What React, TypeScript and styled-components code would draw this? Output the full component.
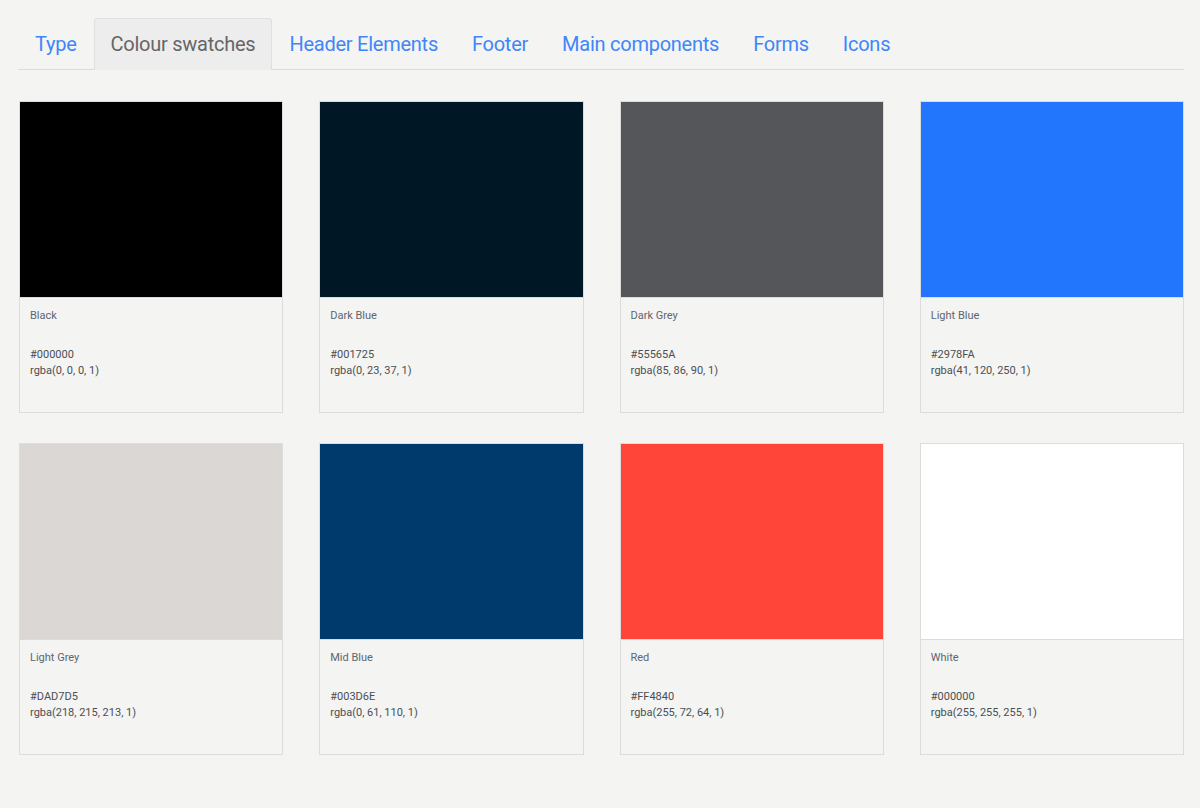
import React from 'react';
import styled, { createGlobalStyle } from 'styled-components';

const GlobalStyle = createGlobalStyle`
  html, body {
    margin: 0;
    padding: 0;
    background: #f4f4f2;
  }
  body {
    font-family: Roboto, 'Liberation Sans', Arial, sans-serif;
  }
`;

type Swatch = {
  name: string;
  hex: string;
  color: string;
  rgba: string;
};

const swatches: Swatch[] = [
  { name: 'Black', hex: '#000000', color: '#000000', rgba: 'rgba(0, 0, 0, 1)' },
  { name: 'Dark Blue', hex: '#001725', color: '#001725', rgba: 'rgba(0, 23, 37, 1)' },
  { name: 'Dark Grey', hex: '#55565A', color: '#55565a', rgba: 'rgba(85, 86, 90, 1)' },
  { name: 'Light Blue', hex: '#2978FA', color: '#2176fd', rgba: 'rgba(41, 120, 250, 1)' },
  { name: 'Light Grey', hex: '#DAD7D5', color: '#dad7d4', rgba: 'rgba(218, 215, 213, 1)' },
  { name: 'Mid Blue', hex: '#003D6E', color: '#003a6c', rgba: 'rgba(0, 61, 110, 1)' },
  { name: 'Red', hex: '#FF4840', color: '#ff453a', rgba: 'rgba(255, 72, 64, 1)' },
  { name: 'White', hex: '#000000', color: '#ffffff', rgba: 'rgba(255, 255, 255, 1)' },
];

const tabs = [
  'Type',
  'Colour swatches',
  'Header Elements',
  'Footer',
  'Main components',
  'Forms',
  'Icons',
];

const App = () => {
  const active = 'Colour swatches';
  return (
    <Page>
      <GlobalStyle />
      <Tabs>
        {tabs.map((t) => (
          <Tab key={t} active={t === active}>
            {t}
          </Tab>
        ))}
      </Tabs>
      <Grid>
        {swatches.map((s) => (
          <Card key={s.name}>
            <Colour fill={s.color} />
            <Info>
              <Name>{s.name}</Name>
              <Values>
                <div>{s.hex}</div>
                <div>{s.rgba}</div>
              </Values>
            </Info>
          </Card>
        ))}
      </Grid>
    </Page>
  );
};

const Page = styled.main`
  padding: 18px 16px 40px 18px;
  min-height: 750px;
`;

const Tabs = styled.ul`
  display: flex;
  list-style: none;
  margin: 0;
  padding: 0;
  border-bottom: 1px solid #dcdcda;
`;

const Tab = styled.li<{ active?: boolean }>`
  padding: 0 16px;
  height: 51px;
  line-height: 51px;
  font-size: 20px;
  font-weight: 400;
  letter-spacing: -0.25px;
  color: ${(props) => (props.active ? '#666666' : '#3f86f8')};
  background: ${(props) => (props.active ? '#ededed' : 'transparent')};
  border: 1px solid ${(props) => (props.active ? '#e0e0e0' : 'transparent')};
  border-bottom: none;
  border-radius: 3px 3px 0 0;
  margin-bottom: -1px;
  cursor: pointer;
`;

const Grid = styled.div`
  display: grid;
  grid-template-columns: repeat(4, 1fr);
  column-gap: 36px;
  row-gap: 30px;
  margin-top: 31px;
  margin-left: 1px;
`;

const Card = styled.div`
  border: 1px solid #dcdcdc;
  background: #f4f4f2;
`;

const Colour = styled.div<{ fill: string }>`
  height: 195px;
  background: ${(props) => props.fill};
  border-bottom: 1px solid #dcdcdc;
`;

const Info = styled.div`
  height: 114px;
  box-sizing: border-box;
  padding: 10px 10px 0 10px;
  font-size: 11px;
  line-height: 16px;
`;

const Name = styled.div`
  color: #5d6670;
`;

const Values = styled.div`
  margin-top: 23px;
  color: #4a4f55;
`;

export default App;
